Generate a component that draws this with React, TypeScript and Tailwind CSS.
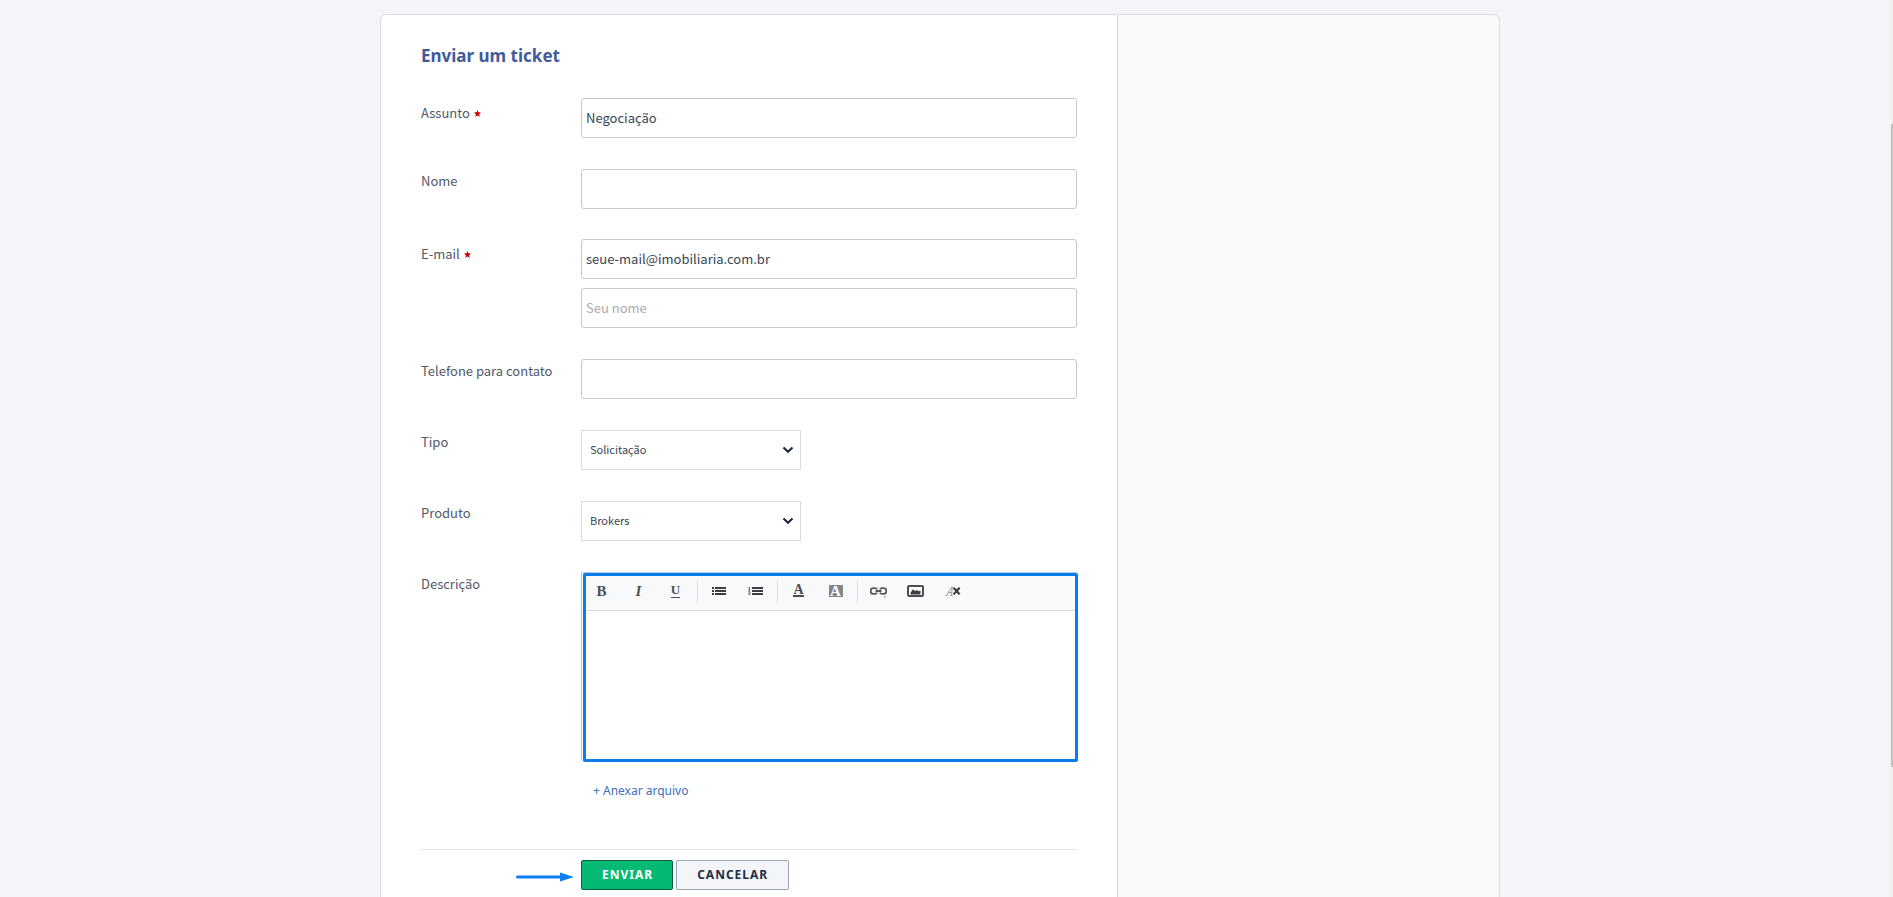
import type { ReactNode } from "react";

const body = "font-['Noto_Sans_CJK_SC','Noto_Sans',sans-serif]";
const inputClass =
  "block h-10 w-full rounded-[3px] border border-[#c6c8cb] bg-white px-1 pb-0.5 text-[13px] text-[#384553] outline-none placeholder:text-[#ababab]";

function Star() {
  return (
    <svg viewBox="0 0 10 10" className="size-[7px]" aria-label="obrigatório">
      <path d="M5 0 6.4 3.3 10 3.7 7.3 6 8.2 9.8 5 7.8 1.8 9.8 2.7 6 0 3.7 3.6 3.3Z" fill="#cc0000" />
    </svg>
  );
}

function Field({ id, label, required, children }: { id: string; label: string; required?: boolean; children: ReactNode }) {
  return (
    <div className="flex items-start">
      <label htmlFor={id} className={`flex w-40 shrink-0 items-center gap-1 text-[13px] leading-5 text-[#4f5967] ${required ? "pt-[5px]" : "pt-0.5"}`}>
        {label}
        {required && <Star />}
      </label>
      <div className="min-w-0 flex-1">{children}</div>
    </div>
  );
}

function Picker({ id, options }: { id: string; options: string[] }) {
  return (
    <div className="relative w-[220px]">
      <select id={id} className="block h-10 w-full appearance-none border border-[#d8dcde] bg-white px-2 pb-0.5 text-[11px] text-[#384553] outline-none">
        {options.map((o) => (
          <option key={o}>{o}</option>
        ))}
      </select>
      <svg viewBox="0 0 12 8" className="pointer-events-none absolute top-4 right-[7px] h-2 w-3" fill="none" stroke="#1b2c3d" strokeWidth="2.2">
        <path d="M1.5 1.5 6 5.7l4.5-4.2" />
      </svg>
    </div>
  );
}

function Tool({ label, children }: { label: string; children: ReactNode }) {
  return (
    <button type="button" aria-label={label} className="mr-1.5 flex h-6 w-[31px] items-center justify-center font-['Liberation_Serif',serif] text-[15px] leading-4 text-[#4b4d52]">
      {children}
    </button>
  );
}

function Separator() {
  return <span className="h-[21px] w-1.5 border-l border-[#d9dcdf]" />;
}

function Toolbar() {
  return (
    <div className="flex h-[35px] items-center border-b border-[#d8dcde] bg-[#f8f9fb] pb-1">
      <Tool label="Negrito"><b>B</b></Tool>
      <Tool label="Itálico"><b><i>I</i></b></Tool>
      <Tool label="Sublinhado"><span className="h-[13px] border-b border-[#4b4d52] text-[13px] font-bold leading-[10px]">U</span></Tool>
      <Separator />
      <Tool label="Lista com marcadores">
        <svg viewBox="0 0 14 8" className="h-2 w-3.5" fill="#3b3d42" shapeRendering="crispEdges">
          <path d="M0 0h2v2H0zM3 0h11v2H3zM0 3h2v2H0zM3 3h11v2H3zM0 6h2v2H0zM3 6h11v2H3z" />
        </svg>
      </Tool>
      <Tool label="Lista numerada">
        <svg viewBox="0 0 15 8" className="h-2 w-[15px]" fill="#3b3d42">
          <path d="M4 0h11v2H4zM4 3h11v2H4zM4 6h11v2H4z" />
          <path d="M.5.5h1V3M.3 3.2h2M.3 4.8h1.7v.8L.5 7.3h1.9" fill="none" stroke="#3b3d42" strokeWidth=".8" />
        </svg>
      </Tool>
      <Separator />
      <Tool label="Cor do texto"><span className="h-3 border-b-2 border-[#4b4d52] text-[14px] font-bold leading-[10px]">A</span></Tool>
      <Tool label="Cor de fundo"><span className="h-3 w-3.5 bg-[#858689] text-center text-[15px] font-bold leading-3 text-white">A</span></Tool>
      <Separator />
      <Tool label="Link">
        <svg viewBox="0 0 17 14" className="h-3.5 w-[17px]" fill="none" stroke="#56585d" strokeWidth="1.9">
          <path d="M7 5.3C6.6 4.4 6 4.1 5 4.1H3.5a2.9 2.9 0 0 0 0 5.8H5c1 0 1.6-.3 2-1.2M10 5.3c.4-.9 1-1.2 2-1.2h1.5a2.9 2.9 0 0 1 0 5.8H12c-1 0-1.6-.3-2-1.2M5.5 7h6" />
          <path d="M13.5 12.4h3L15 14z" fill="#8a8c90" stroke="none" />
        </svg>
      </Tool>
      <Tool label="Imagem">
        <svg viewBox="0 0 17 12" className="h-3 w-[17px]">
          <rect x="1" y="1" width="15" height="10" rx="1" fill="#fff" stroke="#4b4d52" strokeWidth="2" />
          <path d="M3.5 9.5V7.7L6 4.2l2.3 2 1.4-1.4 1.5 1.4 2.3-.8v4.1z" fill="#3b3d42" />
        </svg>
      </Tool>
      <Tool label="Remover formatação">
        <svg viewBox="0 0 16 10" className="h-2.5 w-4" fill="none">
          <path d="M.3 9.7h2.2M4.8 9.7h3M1.4 9.6 7.2.5l-.6 9.1M3.4 6.6h3.4" stroke="#96989b" strokeWidth="1" />
          <path d="m8.6 1.8 6 6.6m0-6.6-6 6.6" stroke="#34363b" strokeWidth="2.1" />
        </svg>
      </Tool>
    </div>
  );
}

export default function App() {
  return (
    <div className={`flex min-h-screen flex-col bg-[#f3f5f9] pt-3.5 pr-[13px] ${body}`}>
      <main className="mx-auto flex w-full max-w-[1120px] flex-1 rounded-t-md border border-b-0 border-[#d9dde3] bg-[#f8f9fb]">
        <form className="w-[737px] max-w-full rounded-tl-md border-r border-[#d8dcde] bg-white px-10 pt-[29px]" onSubmit={(e) => e.preventDefault()}>
          <h1 className="font-['Noto_Sans',sans-serif] text-[17px] leading-6 font-bold text-[#3f5b9c]">Enviar um ticket</h1>
          <div className="mt-[30px] flex flex-col gap-[30px]">
            <div className="flex flex-col gap-[31px]">
              <Field id="assunto" label="Assunto" required>
                <input id="assunto" defaultValue="Negociação" className={inputClass} />
              </Field>
              <Field id="nome" label="Nome">
                <input id="nome" className={inputClass} />
              </Field>
            </div>
            <div className="flex flex-col gap-[31px]">
              <Field id="email" label="E-mail" required>
                <div className="flex flex-col gap-[9px]">
                  <input id="email" type="email" defaultValue="seue-mail@imobiliaria.com.br" className={inputClass} />
                  <input aria-label="Seu nome" placeholder="Seu nome" className={inputClass} />
                </div>
              </Field>
              <Field id="telefone" label="Telefone para contato">
                <input id="telefone" type="tel" className={inputClass} />
              </Field>
              <Field id="tipo" label="Tipo">
                <Picker id="tipo" options={["Solicitação"]} />
              </Field>
              <Field id="produto" label="Produto">
                <Picker id="produto" options={["Brokers"]} />
              </Field>
              <Field id="descricao" label="Descrição">
                <div className="-mr-px rounded-[3px] border-t border-l border-[#a6cdf5] pl-px">
                  <div className="rounded-xs border-[3px] border-[#0c7ce9]">
                    <Toolbar />
                    <textarea id="descricao" className="block h-[148px] w-full resize-none bg-white p-2 text-[13px] text-[#384553] outline-none" />
                  </div>
                </div>
              </Field>
            </div>
          </div>
          <div className="mt-[19px] ml-[172px]">
            <a href="#anexar" className="block font-['Noto_Sans',sans-serif] text-xs leading-5 text-[#4070c0]">+ Anexar arquivo</a>
          </div>
          <div className="mt-12 flex border-t border-[#e2e5e7] pt-2.5">
            <div className="flex w-40 items-center justify-end pt-1 pr-[7px]">
              <svg viewBox="0 0 58 10" className="h-2.5 w-[58px]" fill="#0c7ff2" aria-hidden="true">
                <path d="M1.5 3.5H44V.5L58 5 44 9.5v-3H1.5a1.5 1.5 0 0 1 0-3Z" />
              </svg>
            </div>
            <div className="flex gap-[3px] font-['Noto_Sans',sans-serif] text-xs font-bold tracking-[1px]">
              <button type="submit" className="h-[30px] rounded-xs border border-[#0a5f42] bg-[#04b973] pr-[19px] pl-5 text-white">ENVIAR</button>
              <button type="button" className="h-[30px] rounded-xs border border-[#9aa5b4] bg-[#f3f5f9] px-5 text-[#1c2f45]">CANCELAR</button>
            </div>
          </div>
        </form>
      </main>
      <div className="fixed inset-y-0 right-0 w-1 bg-[#f1f1f1] pt-[124px]" aria-hidden="true">
        <div className="ml-0.5 h-[643px] bg-[#c1c1c1]" />
      </div>
    </div>
  );
}
